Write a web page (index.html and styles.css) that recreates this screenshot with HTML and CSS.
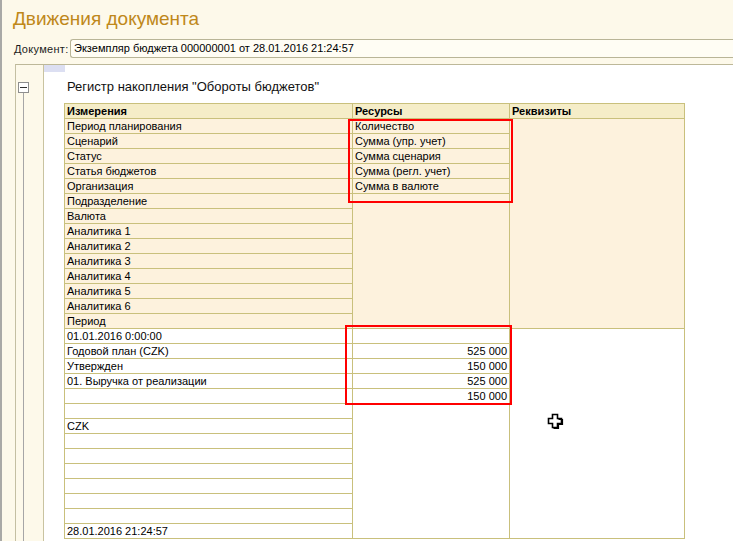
FILE: index.html
```html
<!DOCTYPE html>
<html lang="ru">
<head>
<meta charset="utf-8">
<title>Движения документа</title>
<link rel="stylesheet" href="styles.css">
</head>
<body>
<div class="window">
  <h1 class="title">Движения документа</h1>
  <div class="docrow">
    <span class="doclabel">Документ:</span>
    <div class="docfield">Экземпляр бюджета 000000001 от 28.01.2016 21:24:57</div>
  </div>
  <div class="panel">
    <div class="gutter">
      <div class="toggle"><span class="minus"></span></div>
      <div class="treeline"></div>
    </div>
    <div class="content">
      <div class="chip"></div>
      <div class="regtitle">Регистр накопления "Обороты бюджетов"</div>
      <div class="grid">
        <div class="hd">Измерения</div>
        <div class="hd">Ресурсы</div>
        <div class="hd">Реквизиты</div>

        <div class="col">
          <div class="sect cream">
            <div class="r">Период планирования</div>
            <div class="r">Сценарий</div>
            <div class="r">Статус</div>
            <div class="r">Статья бюджетов</div>
            <div class="r">Организация</div>
            <div class="r">Подразделение</div>
            <div class="r">Валюта</div>
            <div class="r">Аналитика 1</div>
            <div class="r">Аналитика 2</div>
            <div class="r">Аналитика 3</div>
            <div class="r">Аналитика 4</div>
            <div class="r">Аналитика 5</div>
            <div class="r">Аналитика 6</div>
            <div class="r">Период</div>
          </div>
          <div class="sect white">
            <div class="r">01.01.2016 0:00:00</div>
            <div class="r">Годовой план (CZK)</div>
            <div class="r">Утвержден</div>
            <div class="r">01. Выручка от реализации</div>
            <div class="r"></div>
            <div class="r"></div>
            <div class="r">CZK</div>
            <div class="r"></div>
            <div class="r"></div>
            <div class="r"></div>
            <div class="r"></div>
            <div class="r"></div>
            <div class="r"></div>
            <div class="r">28.01.2016 21:24:57</div>
          </div>
        </div>

        <div class="col">
          <div class="block cream">
            <div class="r">Количество</div>
            <div class="r">Сумма (упр. учет)</div>
            <div class="r">Сумма сценария</div>
            <div class="r">Сумма (регл. учет)</div>
            <div class="r">Сумма в валюте</div>
          </div>
          <div class="block white">
            <div class="r"></div>
            <div class="r num">525 000</div>
            <div class="r num">150 000</div>
            <div class="r num">525 000</div>
            <div class="r num">150 000</div>
          </div>
        </div>

        <div class="col">
          <div class="block cream"></div>
          <div class="block white"></div>
        </div>

        <div class="redbox rb1"></div>
        <div class="redbox rb2"></div>
        <svg class="cursor" width="17" height="17" viewBox="0 0 17 17">
          <polygon points="5.5,1.5 10.5,1.5 10.5,5.5 14.5,5.5 14.5,10.5 10.5,10.5 10.5,14.5 5.5,14.5 5.5,10.5 1.5,10.5 1.5,5.5 5.5,5.5" fill="#fff" stroke="#000" stroke-width="1.6" stroke-linejoin="miter"/>
          <polyline points="11.5,6.5 15.5,6.5 15.5,11.5 11.5,11.5 11.5,15.5 6.5,15.5" fill="none" stroke="#000" stroke-width="1.2"/>
        </svg>
      </div>
    </div>
  </div>
</div>
</body>
</html>
```
FILE: styles.css
```css
* { box-sizing: border-box; }

html, body {
  margin: 0;
  padding: 0;
  height: 100%;
  overflow: hidden;
  background: #ffffff;
}

body {
  font-family: "Liberation Sans", Arial, sans-serif;
  font-size: 11px;
  color: #000;
}

.window {
  height: 100vh;
  border-left: 2px solid #a9a9a6;
  background: #fdf9ea;
  padding-left: 11px;
  display: flex;
  flex-direction: column;
}

.title {
  margin: 0;
  padding-top: 8px;
  font-size: 19px;
  line-height: 21px;
  font-weight: normal;
  color: #bf881a;
}

.docrow {
  margin-top: 10px;
  display: flex;
  align-items: center;
  height: 19px;
}

.doclabel {
  flex: none;
  width: 57px;
  padding-left: 1px;
  font-size: 11px;
  letter-spacing: 0.3px;
  color: #1c1c1c;
}

.docfield {
  flex: 1;
  height: 19px;
  border: 1px solid #b9b597;
  border-right: none;
  border-radius: 3px 0 0 3px;
  background: #fffdf4;
  line-height: 17px;
  padding-left: 3px;
  font-size: 11px;
  white-space: nowrap;
}

.panel {
  margin-top: 6px;
  margin-left: 2px;
  flex: 1;
  display: flex;
  border-top: 1px solid #bdb899;
  border-left: 1px solid #c4bfa2;
  min-height: 0;
}

.gutter {
  flex: none;
  width: 28px;
  border-right: 1px solid #c9c3a0;
  background: #fdf9ea;
  display: flex;
  flex-direction: column;
  padding-top: 17px;
  padding-left: 2px;
}

.toggle {
  width: 11px;
  height: 11px;
  border: 1px solid #8e8e8e;
  background: #ffffff;
  display: flex;
  align-items: center;
  justify-content: center;
}

.minus {
  width: 7px;
  height: 1px;
  background: #303030;
}

.treeline {
  flex: 1;
  margin-left: 5px;
  border-left: 1px solid #a6a6a6;
}

.content {
  flex: 1;
  background: #ffffff;
  min-width: 0;
}

.chip {
  width: 21px;
  height: 7px;
  background: #dcdff2;
}

.regtitle {
  margin-top: 7px;
  padding-left: 23px;
  font-size: 13px;
  line-height: 15px;
  color: #111;
  white-space: nowrap;
}

.grid {
  position: relative;
  margin-top: 9px;
  margin-left: 20px;
  display: grid;
  grid-template-columns: 288px 157px 175px;
  width: 621px;
  border-top: 1px solid #c9c07c;
  border-left: 1px solid #c9c07c;
}

.hd {
  height: 15px;
  line-height: 14px;
  padding-left: 2px;
  font-weight: bold;
  background: #f5edc8;
  border-bottom: 1px solid #c9c07c;
  border-right: 1px solid #c9c07c;
  white-space: nowrap;
}

.col {
  border-right: 1px solid #c9c07c;
}

.r {
  height: 15px;
  line-height: 14px;
  padding: 0 2px;
  border-bottom: 1px solid #c9c07c;
  white-space: nowrap;
  overflow: hidden;
}

.num {
  text-align: right;
}

.cream { background: #fdf2dd; }
.white { background: #ffffff; }

.block {
  height: 210px;
  border-bottom: 1px solid #c9c07c;
}

.redbox {
  position: absolute;
  border: 2px solid #ff0000;
}

.rb1 {
  left: 283px;
  top: 15px;
  width: 165px;
  height: 84px;
}

.rb2 {
  left: 280px;
  top: 221px;
  width: 167px;
  height: 80px;
}

.cursor {
  position: absolute;
  left: 482px;
  top: 309px;
}
```
